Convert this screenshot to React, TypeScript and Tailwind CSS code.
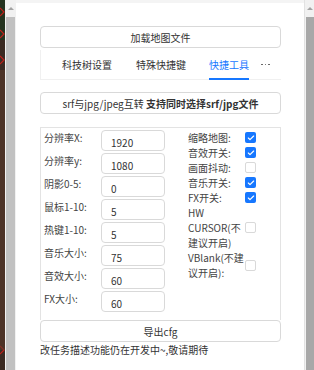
import { Check } from "lucide-react";

const fields = [
  { label: "分辨率X:", value: "1920" },
  { label: "分辨率y:", value: "1080" },
  { label: "阴影0-5:", value: "0" },
  { label: "鼠标1-10:", value: "5" },
  { label: "热键1-10:", value: "5" },
  { label: "音乐大小:", value: "75" },
  { label: "音效大小:", value: "60" },
  { label: "FX大小:", value: "60" },
];

function Box({ checked }: { checked: boolean }) {
  return checked ? (
    <div className="w-[11px] h-[11px] rounded-[2px] bg-[#1677ff] flex items-center justify-center shrink-0">
      <Check size={8} strokeWidth={3.5} className="text-white" />
    </div>
  ) : (
    <div className="w-[11px] h-[11px] rounded-[2px] border border-[#d9d9d9] bg-white shrink-0" />
  );
}

function Toggle({ children, checked }: { children: React.ReactNode; checked: boolean }) {
  return (
    <div className="flex items-center">
      <div className="w-[57px] leading-[15px]">{children}</div>
      <Box checked={checked} />
    </div>
  );
}

export default function App() {
  return (
    <div
      className="flex w-[314px] h-[370px] overflow-hidden bg-white text-[10px] text-[#333]"
      style={{ fontFamily: "'Noto Sans CJK SC', sans-serif" }}
    >
      {/* map behind */}
      <div className="w-[5px] bg-[#3b2a22] relative overflow-hidden">
        <svg width="5" height="370" className="absolute inset-0">
          <rect width="5" height="40" fill="#24331f" />
          <path d="M0 8 L4 12 L0 16 M0 30 L4 34 L0 38 M0 56 L4 60 L0 64 M0 346 L4 350 L0 354" stroke="#c0201a" strokeWidth="1.2" fill="none" />
          <rect y="70" width="5" height="280" fill="#5a3a2c" opacity="0.6" />
        </svg>
      </div>
      {/* left scrollbar */}
      <div className="w-[11px] bg-[#f1f1f1] flex flex-col">
        <div className="h-[17px] flex items-center justify-center">
          <div className="w-0 h-0 border-l-[3px] border-r-[3px] border-b-[3px] border-l-transparent border-r-transparent border-b-[#a3a3a3]" />
        </div>
        <div className="flex-1 bg-[#c1c1c1] mx-[1px]" />
      </div>

      {/* main panel */}
      <div className="flex-1 flex flex-col">
        <div className="h-[3px] bg-[#f4f4f4]" />
        <div className="pl-[24px] pr-[23px] pt-[23px]">
          <div className="h-[22px] border border-[#d9d9d9] rounded-[4px] flex items-center justify-center">
            加载地图文件
          </div>

          <div className="mt-[2px] h-[30px] border-b border-[#f0f0f0] flex items-stretch pl-[22px] shadow-[inset_1px_0_0_#f0f0f0]">
            <div className="flex items-center">科技树设置</div>
            <div className="flex items-center ml-[24px]">特殊快捷键</div>
            <div className="flex items-center ml-[23px] text-[#1677ff] relative">
              快捷工具
              <div className="absolute left-0 right-0 bottom-[-1px] h-[2px] bg-[#1677ff]" />
            </div>
            <div className="flex items-center gap-[2px] ml-[12px]">
              <div className="w-[1.5px] h-[1.5px] rounded-full bg-[#555]" />
              <div className="w-[1.5px] h-[1.5px] rounded-full bg-[#555]" />
              <div className="w-[1.5px] h-[1.5px] rounded-full bg-[#555]" />
            </div>
          </div>

          <div className="mt-[12px] h-[22px] border border-[#d9d9d9] rounded-[4px] flex items-center justify-center">
            srf与jpg/jpeg互转&nbsp;<span className="font-bold">支持同时选择srf/jpg文件</span>
          </div>

          <div className="mt-[13px] h-[193px] border border-b-0 border-[#e3e3e3] flex text-[#444]">
            <div className="w-[147px] pl-[3px] pt-[2px] flex flex-col">
              {fields.map((f) => (
                <div key={f.label} className="flex h-[23px]">
                  <div className="w-[57px] leading-[15px]">{f.label}</div>
                  <div className="w-[64px] h-[21px] border border-[#d9d9d9] rounded-[4px] pl-[9px] pt-[4px] leading-[15px] text-[#333]">
                    {f.value}
                  </div>
                </div>
              ))}
            </div>
            <div className="flex flex-col pt-[2px]">
              <Toggle checked>缩略地图:</Toggle>
              <Toggle checked>音效开关:</Toggle>
              <Toggle checked={false}>画面抖动:</Toggle>
              <Toggle checked>音乐开关:</Toggle>
              <Toggle checked>FX开关:</Toggle>
              <Toggle checked={false}>
                HW
                <br />
                CURSOR(不
                <br />
                建议开启)
              </Toggle>
              <Toggle checked={false}>
                VBlank(不建
                <br />
                议开启):
              </Toggle>
            </div>
          </div>

          <div className="h-[22px] border border-[#d9d9d9] rounded-[4px] flex items-center justify-center">
            导出cfg
          </div>
          <div className="leading-[16px] text-[#333]">改任务描述功能仍在开发中~,敬请期待</div>
        </div>
      </div>

      {/* right scrollbar */}
      <div className="w-[10px] bg-[#f1f1f1] border-l border-[#e2e2e2] flex flex-col">
        <div className="h-[17px] flex items-center justify-center">
          <div className="w-0 h-0 border-l-[3px] border-r-[3px] border-b-[3px] border-l-transparent border-r-transparent border-b-[#a3a3a3]" />
        </div>
        <div className="flex-1 bg-[#a8a8a8] ml-[1px]" />
      </div>
    </div>
  );
}
